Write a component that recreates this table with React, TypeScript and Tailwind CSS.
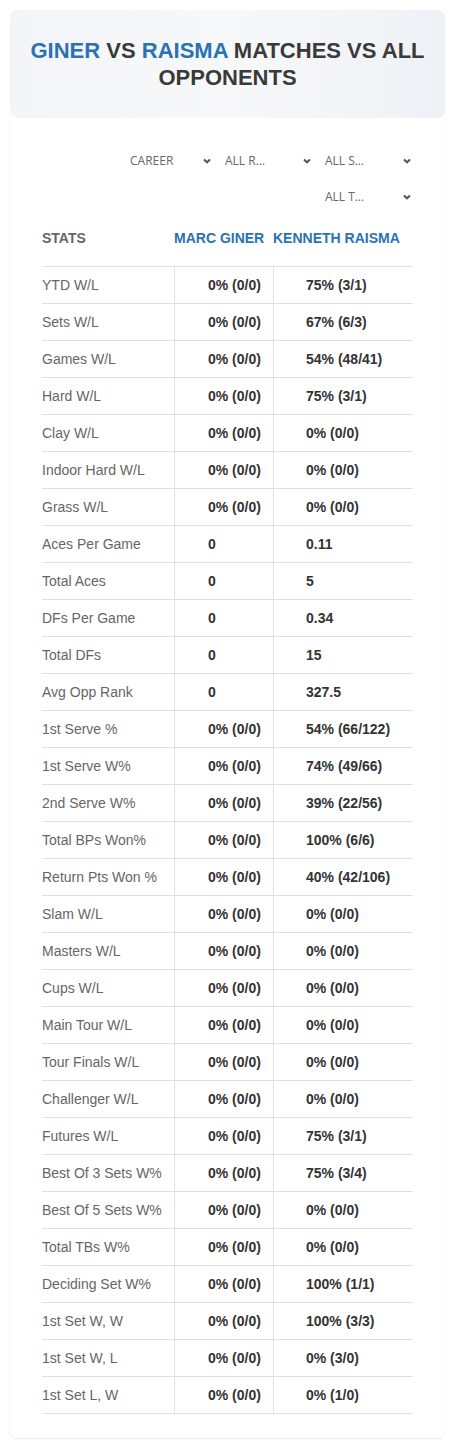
import React from "react";

const rows: [string, string, string][] = [
  ["YTD W/L", "0% (0/0)", "75% (3/1)"],
  ["Sets W/L", "0% (0/0)", "67% (6/3)"],
  ["Games W/L", "0% (0/0)", "54% (48/41)"],
  ["Hard W/L", "0% (0/0)", "75% (3/1)"],
  ["Clay W/L", "0% (0/0)", "0% (0/0)"],
  ["Indoor Hard W/L", "0% (0/0)", "0% (0/0)"],
  ["Grass W/L", "0% (0/0)", "0% (0/0)"],
  ["Aces Per Game", "0", "0.11"],
  ["Total Aces", "0", "5"],
  ["DFs Per Game", "0", "0.34"],
  ["Total DFs", "0", "15"],
  ["Avg Opp Rank", "0", "327.5"],
  ["1st Serve %", "0% (0/0)", "54% (66/122)"],
  ["1st Serve W%", "0% (0/0)", "74% (49/66)"],
  ["2nd Serve W%", "0% (0/0)", "39% (22/56)"],
  ["Total BPs Won%", "0% (0/0)", "100% (6/6)"],
  ["Return Pts Won %", "0% (0/0)", "40% (42/106)"],
  ["Slam W/L", "0% (0/0)", "0% (0/0)"],
  ["Masters W/L", "0% (0/0)", "0% (0/0)"],
  ["Cups W/L", "0% (0/0)", "0% (0/0)"],
  ["Main Tour W/L", "0% (0/0)", "0% (0/0)"],
  ["Tour Finals W/L", "0% (0/0)", "0% (0/0)"],
  ["Challenger W/L", "0% (0/0)", "0% (0/0)"],
  ["Futures W/L", "0% (0/0)", "75% (3/1)"],
  ["Best Of 3 Sets W%", "0% (0/0)", "75% (3/4)"],
  ["Best Of 5 Sets W%", "0% (0/0)", "0% (0/0)"],
  ["Total TBs W%", "0% (0/0)", "0% (0/0)"],
  ["Deciding Set W%", "0% (0/0)", "100% (1/1)"],
  ["1st Set W, W", "0% (0/0)", "100% (3/3)"],
  ["1st Set W, L", "0% (0/0)", "0% (3/0)"],
  ["1st Set L, W", "0% (0/0)", "0% (1/0)"],
];

const Chevron = () => (
  <svg width="8" height="6" viewBox="0 0 8 6" fill="none">
    <path d="M1 1.5l3 2.8 3-2.8" stroke="#555" strokeWidth="2" />
  </svg>
);

const Select = ({ label, first }: { label: string; first?: boolean }) => (
  <div
    className={
      "w-[100px] h-[36px] flex items-center justify-between pr-[4px] text-[12px] text-[#666] [font-family:'Open_Sans',sans-serif] " +
      (first ? "pl-[15px]" : "pl-[10px]")
    }
  >
    <span>{label}</span>
    <Chevron />
  </div>
);

const App = () => {
  return (
    <div className="bg-white min-h-[1448px] px-[10px] pt-[10px] [font-family:'Liberation_Sans',Arial,sans-serif]">
      <div className="rounded-lg shadow-[0_1px_2px_rgba(0,0,0,0.08)] bg-white pb-[24px]">
        <div className="rounded-lg bg-gradient-to-r from-[#f3f5f8] via-[#f7f8fa] to-[#eef2f6] py-[27px] text-center text-[22px] leading-[27px] font-bold text-[#3a3a3a] px-[12px]">
          <span className="text-[#2a72b3]">GINER</span> VS{" "}
          <span className="text-[#2a72b3]">RAISMA</span> MATCHES VS ALL
          OPPONENTS
        </div>

        <div className="mt-[25px] pr-[30px] flex flex-col items-end">
          <div className="flex">
            <Select label="CAREER" first />
            <Select label="ALL R…" />
            <Select label="ALL S…" />
          </div>
          <div className="flex">
            <Select label="ALL T…" />
          </div>
        </div>

        <div className="ml-[32px] w-[371px]">
          <div className="grid grid-cols-[132px_99px_140px] h-[52px] items-center pb-[4px] text-[14px] font-bold border-b border-[#e0e0e0]">
            <div className="text-[#666]">STATS</div>
            <div className="text-[#2a72b3] whitespace-nowrap">MARC GINER</div>
            <div className="text-[#2a72b3] whitespace-nowrap">KENNETH RAISMA</div>
          </div>
          {rows.map(([label, a, b]) => (
            <div
              key={label}
              className="grid grid-cols-[132px_99px_140px] h-[37px] text-[14px] border-b border-[#e0e0e0]"
            >
              <div className="flex items-center text-[#666]">{label}</div>
              <div className="flex items-center pl-[33px] font-bold text-[#333] border-l border-[#e0e0e0]">
                {a}
              </div>
              <div className="flex items-center pl-[32px] font-bold text-[#333] border-l border-[#e0e0e0]">
                {b}
              </div>
            </div>
          ))}
        </div>
      </div>
    </div>
  );
};

export default App;
